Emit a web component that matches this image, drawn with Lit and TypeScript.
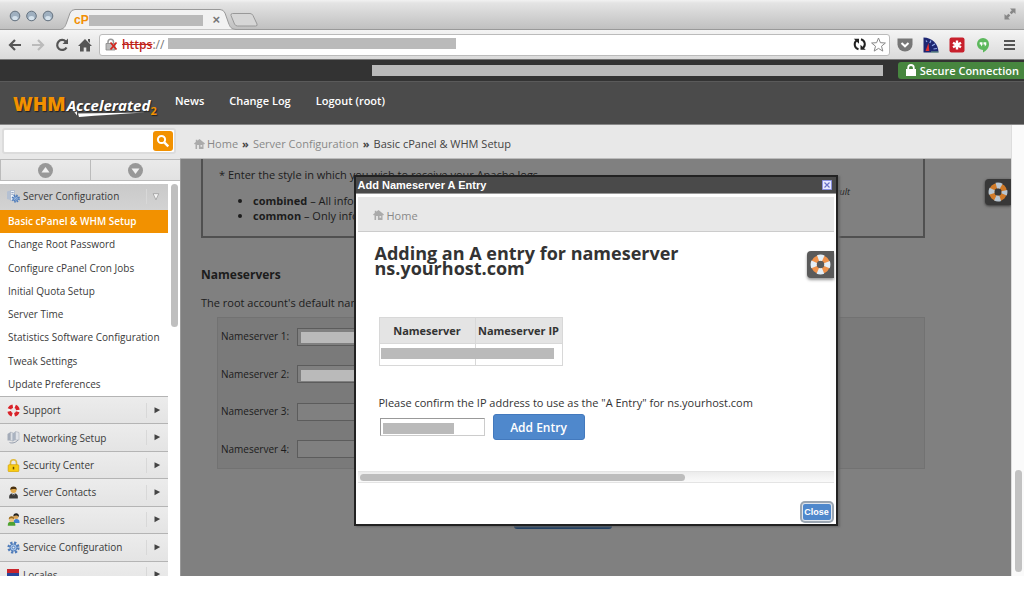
import { LitElement, html, css, svg } from "lit";
import { customElement } from "lit/decorators.js";
import { classMap } from "lit/directives/class-map.js";

const setupPages = [
  "Basic cPanel & WHM Setup",
  "Change Root Password",
  "Configure cPanel Cron Jobs",
  "Initial Quota Setup",
  "Server Time",
  "Statistics Software Configuration",
  "Tweak Settings",
  "Update Preferences",
];

const gear = (cx: number, cy: number, r: number) => svg`
  <circle cx=${cx} cy=${cy} r=${r} fill="none" stroke="#4f7cba" stroke-width=${r * 0.5} stroke-dasharray="${(r * 0.45).toFixed(2)} ${(r * 0.3354).toFixed(2)}"/>
  <circle cx=${cx} cy=${cy} r=${r * 0.72} fill="#a9c6ea" stroke="#4f7cba" stroke-width="1"/>
  <circle cx=${cx} cy=${cy} r=${r * 0.28} fill="#e8eef6" stroke="#4f7cba" stroke-width=".9"/>`;

const icons = {
  server: svg`
    <path d="M0 1.500 3.500.5v9.500L0 9z" fill="#b4c0d2"/><path d="M3.500.5h4v10h-4z" fill="#eef2f8" stroke="#9aabc4" stroke-width=".6"/>
    <path d="M4.300 2.500h2.400M4.300 4.300h2.400" stroke="#7f94b5" stroke-width=".8"/>${gear(8.8, 8.6, 3.3)}`,
  support: svg`
    <circle cx="6.500" cy="6.500" r="4.400" fill="none" stroke="#f3f3f3" stroke-width="3.600"/>
    <circle cx="6.500" cy="6.500" r="4.400" fill="none" stroke="#d8232a" stroke-width="3.600" stroke-dasharray="4.400 2.510" stroke-dashoffset="-1.250"/>`,
  network: svg`
    <path d="M.5 3 3.500 1v8.500L.5 9.500z" fill="#a3abb8"/><path d="M3.500 1 6.200 2v8L3.500 9.500z" fill="#dcdfe5" stroke="#9aa2ae" stroke-width=".5"/>
    <path d="M5.500 2.500 8.500.5V9L5.500 10.500z" fill="#aab3c1"/><path d="M8.500.5 12 1.500V9L8.500 9z" fill="#dfe2e8" stroke="#9aa2ae" stroke-width=".5"/>
    <path d="M2.500 11.500c3 1.200 6.500 0 8.500-2.500" fill="none" stroke="#8a94a6" stroke-width=".9"/>`,
  security: svg`
    <path d="M3.500 6.500V3.800a3 3 0 0 1 6 0v2.700" fill="none" stroke="#e0b93a" stroke-width="1.600"/>
    <rect x="1.200" y="5.700" width="10.600" height="7" rx="1" fill="#f9cd12" stroke="#d29d05" stroke-width=".7"/>
    <path d="M6.500 7.800v2.600" stroke="#6b4d00" stroke-width="1.500"/>`,
  contact: svg`
    <path d="M2.200 12.500c-.6-4 1.600-5.300 4.300-5.300s4.900 1.300 4.300 5.300z" fill="#3a3a3a"/>
    <path d="M5.200 7.200h2.600L6.500 11z" fill="#fff"/><path d="M6.500 8v3" stroke="#222" stroke-width=".8"/>
    <circle cx="6.500" cy="4" r="3" fill="#e2ab4c"/><path d="M3.300 4C3 1.500 4.500.4 6.500.4S10 1.500 9.700 4C8.800 2.500 5 2.700 3.300 4z" fill="#4a3210"/>`,
  resellers: svg`
    <path d="M6.500 10c0-3 1-4 3-4s3.300 1 3 4z" fill="#3f7fd0"/><circle cx="9" cy="3.500" r="2.500" fill="#d9a55a"/>
    <path d="M6.400 3.500C6.200 1.200 7.500.3 9.200.3s3.200 1.200 2.600 3.700C10.500 2.300 8 2.200 6.400 3.500z" fill="#222"/>
    <path d="M.8 12.700c-.3-3 1.200-4.200 3.700-4.200S8.700 9.700 8.300 12.700z" fill="#4fa332"/><circle cx="4.500" cy="6.400" r="2.600" fill="#efc27c"/>
    <path d="M1.800 6.300C1.600 4.200 3 3.300 4.600 3.300s2.800 1 2.500 3C5.800 5 3.500 5 1.800 6.300z" fill="#9a6a1c"/>`,
  service: gear(6.5, 6.5, 4.9),
  locales: svg`
    <path d="M0 1h12v4H0z" fill="#c9252c"/><path d="M0 5h12v5H0z" fill="#28469b"/><path d="M3 9h9v2.500H3z" fill="#e9e9f2"/>
    <path d="M8 9h4.500v3H8z" fill="#e88"/>`,
};
const icon = (name: keyof typeof icons) =>
  html`<svg class="icon" viewBox="0 0 13 13" aria-hidden="true">${icons[name]}</svg>`;

const groups: [keyof typeof icons, string][] = [
  ["support", "Support"],
  ["network", "Networking Setup"],
  ["security", "Security Center"],
  ["contact", "Server Contacts"],
  ["resellers", "Resellers"],
  ["service", "Service Configuration"],
  ["locales", "Locales"],
];

const house = html`<svg class="house" viewBox="0 0 11 10" aria-hidden="true">
  <path d="M5.500 0 11 4.600 10 5.500 9.500 5v5H1.500V5L1 5.500 0 4.600 1.800 3V.8h1.500V1.800z" fill="#aaa"/>
  <path d="M3 6h2v4H3zM6.500 6h1.700v1.800H6.500z" fill="#e2e2e2"/>
</svg>`;

const lifebuoy = html`<svg class="buoy" viewBox="0 0 22 22" aria-hidden="true">
  <circle cx="11" cy="11" r="7" fill="none" stroke="var(--buoy)" stroke-width="6"/>
  <circle cx="11" cy="11" r="7.200" fill="none" stroke="currentColor" stroke-width="6.400" stroke-dasharray="5.655 5.655" stroke-dashoffset="2.827"/>
</svg>`;

const tokens = css`
  :host { display: block; }
  * { box-sizing: border-box; }
  h1, h2, p, ul { margin: 0; padding: 0; }
  ul { list-style: none; }
  a { color: inherit; text-decoration: none; }
  button, input { font: inherit; color: inherit; border: 0; padding: 0; margin: 0; background: none; border-radius: 0; }
  svg { display: block; flex: none; }
  .house { width: 11px; height: 10px; }
  .bar { background: #bababa; height: 11px; }
`;

@customElement("browser-chrome")
export class BrowserChrome extends LitElement {
  static styles = [tokens, css`
    .tabs { height: 30px; padding-left: 9px; display: flex; background: linear-gradient(#f2f2f2, #e4e4e4 10%, #c0c0c0); border-bottom: 1px solid #999; }
    .lights { width: 46px; height: 12px; margin-top: 10px; }
    .tab { width: 176px; height: 21px; margin: 9px 0 0 6px; display: grid; }
    .tab > * { grid-area: 1 / 1; }
    .tab svg { width: 100%; height: 21px; }
    .label { display: flex; align-items: center; padding: 1px 17px 0 13px; z-index: 1; }
    .fav { font: bold 12px/12px "Liberation Sans", Arial, sans-serif; color: #f18f05; }
    .label .bar { flex: 1; }
    .x { margin-left: 9px; font: bold 13px/12px "Liberation Sans", Arial, sans-serif; color: #777; }
    .new { width: 30px; height: 14px; margin: 13px auto 0 -8px; }
    .expand { width: 12px; height: 12px; margin: 8px 8px 0 0; }
    .tools { height: 30px; padding: 4px 7px 4px 8px; display: flex; align-items: center; background: linear-gradient(#f4f4f4, #dadada); border-bottom: 1px solid #777; }
    .nav { width: 84px; height: 18px; margin-right: 7px; display: flex; align-items: center; justify-content: space-between; }
    .nav svg { width: 14px; height: 14px; }
    .url { flex: 1; height: 22px; background: #fff; border: 1px solid #bbb; border-radius: 3px; display: flex; align-items: center; padding: 0 3px 0 5px; font: 12px "Open Sans", sans-serif; color: #777; }
    .url s { color: #c02318; font-weight: 600; }
    .url .lock { width: 13px; height: 13px; margin-right: 4px; }
    .url .bar { width: 288px; margin: 0 auto 3px 4px; }
    .url .glyphs { width: 33px; height: 15px; }
    .ext { display: flex; gap: 10px; margin-left: 7px; }
    .ext svg { width: 16px; height: 16px; }
  `];
  render() {
    return html`
      <div class="tabs">
        <svg class="lights" viewBox="0 0 46 12" aria-hidden="true">
          ${[6, 22.5, 39].map(x => svg`<circle cx=${x} cy="6" r="4.800" fill="#9fb0c0" stroke="#667380"/><ellipse cx=${x} cy="8" rx="2.800" ry="2" fill="#d5e2ec"/>`)}
        </svg>
        <div class="tab">
          <svg viewBox="0 0 176 21" preserveAspectRatio="none" aria-hidden="true"><path d="M-2 20.500C3 20 4 18 5.500 14L9 4Q10.500.5 14 .5H159Q162.500.5 164 4L167.500 14C169 18 170 20 175 20.500V21H-2z" fill="#f2f2f2" stroke="#999"/></svg>
          <div class="label"><span class="fav">cP</span><span class="bar"></span><span class="x">×</span></div>
        </div>
        <svg class="new" viewBox="0 0 30 14" aria-hidden="true"><path d="M3.500.5H21q2 0 3 2L28 11q.8 2-1.500 2H8.500q-2 0-3-2L2 2.500Q1.500.5 3.500.5z" fill="#d6d6d6" stroke="#999"/></svg>
        <svg class="expand" viewBox="0 0 12 12" aria-hidden="true"><path d="M6 .5h5.500V6L9.700 4.200 7.500 6.300 5.700 4.500 7.800 2.300zM6 11.500H.5V6l1.800 1.800L4.500 5.700l1.800 1.800L4.200 9.700z" fill="#888"/></svg>
      </div>
      <div class="tools">
        <div class="nav">
          <svg viewBox="0 0 14 14"><path d="M13 7H2.500M7 2 2 7l5 5" fill="none" stroke="#555" stroke-width="2.200"/></svg>
          <svg viewBox="0 0 14 14"><path d="M1 7h10.500M7 2l5 5-5 5" fill="none" stroke="#bbb" stroke-width="2.200"/></svg>
          <svg viewBox="0 0 14 14"><path d="M11.500 9.500A5 5 0 1 1 10.800 3.500" fill="none" stroke="#555" stroke-width="2.200"/><path d="M13 .5V6H7.500z" fill="#555"/></svg>
          <svg viewBox="0 0 14 14"><path d="M7 1 14 8h-2v5.500H8.300V9.500H5.700v4H2V8H0zM10 1h2v4l-2-2z" fill="#555"/></svg>
        </div>
        <div class="url">
          <svg class="lock" viewBox="0 0 13 13"><path d="M3 5.500V4a2.700 2.700 0 0 1 5.500 0v1.500" fill="none" stroke="#999" stroke-width="1.500"/><path d="M1 5.500h9V12H1z" fill="#bbb" stroke="#888" stroke-width=".8"/><path d="m5.500 4.500 6 7m0-7-6 7" stroke="#d4241c" stroke-width="1.700"/></svg>
          <s>https</s><span>://</span><span class="bar"></span>
          <svg class="glyphs" viewBox="0 0 33 15"><path d="M5.500 12.200C1.300 11 .5 6 3.500 3.500M8 2.300c4.200 1.200 5 6.200 2 8.700" fill="none" stroke="#222" stroke-width="2"/><path d="M.8 1.800H6v5zM12.700 12.700H7.500v-5z" fill="#222"/><path d="m25.500 1 1.900 4.700 5 .3-3.900 3.200 1.300 4.900-4.300-2.700-4.300 2.700 1.300-4.900L18.600 6l5-.3z" fill="#fff" stroke="#888"/></svg>
        </div>
        <div class="ext">
          <svg viewBox="0 0 16 16"><path d="M.5 1.500h15v6a7.500 7 0 0 1-15 0z" fill="#777"/><path d="m4.500 6 3.500 3.300L11.500 6" fill="none" stroke="#fff" stroke-width="2"/></svg>
          <svg viewBox="0 0 16 16"><path d="M.5.5C9 .5 15.500 7 15.500 15.500H.5z" fill="#1d2672"/><path d="M3 3.500 4 5M8 3.500 6.800 6M12 7l-3 1.800M14 11.500l-3.500.5" stroke="#8fa8e8" stroke-width="1.200"/><path d="m2.500 14 3-8 .8 8z" fill="#e03030"/><path d="M8 15h7.500" stroke="#7a8"/></svg>
          <svg viewBox="0 0 16 16"><rect x=".5" y=".5" width="15" height="15" rx="2" fill="#c8202c"/><path d="M8 3.500v9M4 5.700l8 4.600M12 5.700l-8 4.600" stroke="#fff" stroke-width="2.400"/></svg>
          <svg viewBox="0 0 16 16"><path d="M8 1a6 6 0 0 1 6 6c0 4-2.500 6.500-6 8.500V13a6 6 0 0 1 0-12z" fill="#5cb85c"/><path d="M4.700 5.200h2.800v2.500L6 9.500V7.500H4.700zM8.500 5.200h2.800v2.500L9.800 9.500V7.500H8.500z" fill="#fff"/></svg>
          <svg viewBox="0 0 16 16"><path d="M3 4h11M3 8h11M3 12h11" stroke="#555" stroke-width="2.200"/></svg>
        </div>
      </div>`;
  }
}

@customElement("whm-header")
export class WhmHeader extends LitElement {
  static styles = [tokens, css`
    :host { color: #fff; font: 600 11px/17px "Open Sans", sans-serif; }
    .top { height: 22px; background: #333; border-bottom: 1px solid #5a5a5a; display: flex; justify-content: flex-end; align-items: center; }
    .top .bar { width: 511px; margin-right: 15px; }
    .secure { height: 17px; padding: 0 5px 0 8px; display: flex; align-items: center; gap: 4px; background: #47863f; border-radius: 3px 0 0 3px; }
    .secure svg { width: 10px; height: 12px; margin-bottom: 2px; }
    .main { height: 43px; background: #4b4b4b; border-bottom: 1px solid #888; display: flex; align-items: center; padding: 0 13px; }
    .logo { width: 143px; margin-right: 19px; display: grid; text-shadow: 1px 1px 1px #222; }
    .logo > * { grid-area: 1 / 1; }
    .words { display: flex; align-items: baseline; line-height: 24px; white-space: nowrap; }
    .whm { font-size: 19px; font-weight: 800; color: #f29100; }
    .acc { font: italic 700 15px/24px "Open Sans", sans-serif; margin-left: 1px; padding-top: 4px; }
    .two { font-size: 11px; font-weight: 700; color: #f29100; align-self: flex-end; line-height: 12px; }
    .swoosh { width: 143px; height: 28px; }
    nav { display: flex; gap: 25px; padding-bottom: 5px; }
  `];
  render() {
    return html`
      <div class="top">
        <span class="bar"></span>
        <span class="secure"><svg viewBox="0 0 10 12"><path d="M2.200 6V3.800a2.800 2.800 0 0 1 5.600 0V6" fill="none" stroke="#fff" stroke-width="1.800"/><path d="M0 5h10v7H0z" fill="#fff"/></svg>Secure Connection</span>
      </div>
      <div class="main">
        <div class="logo">
          <svg class="swoosh" viewBox="0 0 143 28"><path d="M61 18 64 23v3.500L59 20zM65 24.500 132 23.500Q96 25.500 66 28z" fill="#fff"/></svg>
          <div class="words"><span class="whm">WHM</span><span class="acc">Accelerated</span><span class="two">2</span></div>
        </div>
        <nav><a href="#news">News</a><a href="#log">Change Log</a><a href="#logout">Logout (root)</a></nav>
      </div>`;
  }
}

@customElement("whm-sidebar")
export class WhmSidebar extends LitElement {
  static styles = [tokens, css`
    :host { width: 180px; overflow: hidden; background: #fff; font: 10px/16px "Open Sans", sans-serif; color: #3a3a3a; }
    .search { height: 34px; padding: 3px 4px 5px 2px; background: #e8e8e8; display: flex; }
    .box { flex: 1; display: flex; align-items: center; background: #fff; border: 2px solid #dcdcdc; border-radius: 3px; padding: 0 1px; }
    .box input { flex: 1; min-width: 0; height: 20px; outline: 0; }
    .go { width: 20px; height: 20px; border-radius: 3px; background: #f29100; }
    .go svg { width: 20px; height: 20px; }
    .pager { display: grid; grid-template-columns: 1fr 1fr; height: 22px; border: solid #bbb; border-width: 1px 0; }
    .pager button { display: grid; place-items: center; background: linear-gradient(#eaeaea, #e2e2e2); border-left: 1px solid #bbb; }
    .pager svg { width: 15px; height: 15px; }
    .scroll { display: flex; gap: 3px; padding-top: 3px; }
    .menu { width: 168px; }
    .track { width: 7px; height: 143px; border-radius: 4px; background: #bfbfbf; }
    .head { width: 100%; display: flex; align-items: center; padding: 0 5px 0 7px; background: linear-gradient(#ececec, #e4e4e4); text-align: left; border-top: 1px solid #b4b4b4; }
    .head .icon { width: 13px; height: 13px; margin-right: 3px; }
    .head span { flex: 1; }
    .head .arrow { width: 17px; height: 15px; border-left: 1px solid #d8d8d8; }
    .head.open { height: 26px; background: linear-gradient(#c9c9c9, #d3d3d3); border: 0; padding-bottom: 2px; }
    .pages { height: 186px; display: grid; grid-auto-rows: 1fr; }
    .pages a { display: flex; align-items: center; padding: 0 0 1px 8px; white-space: nowrap; }
    .pages .on { background: #f29100; color: #fff; font-weight: 600; }
    .groups { height: 192px; display: grid; grid-auto-rows: 1fr; }
  `];
  render() {
    return html`
      <form class="search" role="search"><div class="box">
        <input type="text" aria-label="Search">
        <button class="go" type="button" aria-label="Find"><svg viewBox="0 0 20 20"><circle cx="8.500" cy="8.500" r="3.600" fill="none" stroke="#fff" stroke-width="2"/><path d="m11.300 11.300 4 4" stroke="#fff" stroke-width="2.400"/></svg></button>
      </div></form>
      <div class="pager">
        <button aria-label="Collapse all"><svg viewBox="0 0 15 15"><circle cx="7.500" cy="7.500" r="7.500" fill="#989898"/><path d="m7.500 4 4 5.500h-8z" fill="#f0f0f0"/></svg></button>
        <button aria-label="Expand all"><svg viewBox="0 0 15 15"><circle cx="7.500" cy="7.500" r="7.500" fill="#989898"/><path d="m7.500 11 4-5.500h-8z" fill="#f0f0f0"/></svg></button>
      </div>
      <div class="scroll">
        <div class="menu">
          <button class="head open">${icon("server")}<span>Server Configuration</span>
            <svg class="arrow" viewBox="0 0 17 15"><path d="M6.500 4.500h6l-3 6.500z" fill="#f6f6f6" stroke="#999" stroke-width=".8"/></svg></button>
          <nav class="pages">${setupPages.map((p, i) => html`<a href="#" class=${classMap({ on: i === 0 })}>${p}</a>`)}</nav>
          <div class="groups">${groups.map(([g, label]) => html`<button class="head">${icon(g)}<span>${label}</span>
            <svg class="arrow" viewBox="0 0 17 15"><path d="M8 4v6.500L14 7z" fill="#444"/></svg></button>`)}</div>
        </div>
        <div class="track"></div>
      </div>`;
  }
}

@customElement("whm-setup")
export class WhmSetup extends LitElement {
  static styles = [tokens, css`
    :host { flex: 1; min-height: 0; display: grid; grid-template-columns: 1fr 26px; overflow: hidden; isolation: isolate; background: #808080; border-left: 1px solid #999; font: 11px/15px "Open Sans", sans-serif; color: #1c1c1c; }
    .form { padding: 0 60px 0 20px; }
    .logs { height: 79px; display: flex; justify-content: space-between; border: 2px solid #505050; border-top: 0; padding: 8px 73px 0 16px; }
    .logs ul { list-style: disc; margin-top: 11px; padding-left: 34px; font-size: 11px; }
    .logs b, h2 { font-weight: 700; }
    .note { font: italic 9px/12px "Open Sans", sans-serif; margin-top: 19px; }
    h2 { font-size: 12px; line-height: 18px; margin: 28px 0 11px; }
    .servers { margin: 7px 0 34px 16px; background: #7a7a7a; border: 1px solid #727272; padding: 0 3px; height: 152px; display: grid; grid-auto-rows: 1fr; }
    .row { display: flex; gap: 5px; align-items: center; }
    .row label { width: 71px; font-size: 10px; }
    .cell { display: grid; align-items: center; width: 190px; }
    .cell > * { grid-area: 1 / 1; }
    .cell input { height: 18px; width: 100%; border: 1px solid #5c5c5c; background: #808080; }
    .cell .bar { margin: 2px 2px 0 4px; z-index: 1; }
    .save { display: block; margin: 0 auto; width: 98px; height: 26px; border-radius: 3px; background: #1f3f63; color: #aaa; font-weight: 700; }
    .help { margin-top: 20px; width: 26px; height: 26px; background: #383838; border-radius: 4px 0 0 4px; box-shadow: 0 1px 3px #333; --buoy: #d07a28; color: #b9c6d1; }
    .buoy { width: 20px; height: 20px; margin: 3px; }
  `];
  render() {
    return html`
      <div class="form">
        <div class="logs">
          <div><p>* Enter the style in which you wish to receive your Apache logs.</p>
            <ul><li><b>combined</b> – All information</li><li><b>common</b> – Only information</li></ul></div>
          <span class="note">default</span>
        </div>
        <h2>Nameservers</h2>
        <p>The root account's default nameservers.</p>
        <div class="servers">${[1, 2, 3, 4].map(n => html`<div class="row">
          <label for="ns${n}">Nameserver ${n}:</label>
          <span class="cell"><input id="ns${n}" type="text">${n < 3 ? html`<span class="bar"></span>` : ""}</span>
        </div>`)}</div>
        <button class="save">Save</button>
      </div>
      <button class="help" aria-label="Help">${lifebuoy}</button>`;
  }
}

@customElement("nameserver-dialog")
export class NameserverDialog extends LitElement {
  static styles = [tokens, css`
    :host { width: 484px; background: #fff; border: 2px solid #222; box-shadow: 2px 1px 2px #666; padding-bottom: 4px; font: 11px/15px "Open Sans", sans-serif; color: #333; }
    .title { height: 17px; padding: 0 4px 0 2px; background: #4a4a4a; border-bottom: 1px solid #999; color: #fff; display: flex; align-items: center; justify-content: space-between; font: bold 11px/15px "Liberation Sans", Arial, sans-serif; }
    .title svg, .shut { width: 10px; height: 10px; }
    .body { margin: 3px 2px 0; display: grid; grid-template-columns: 1fr 27px; align-items: start; }
    .crumb { grid-column: 1 / 3; height: 35px; padding-left: 15px; display: flex; align-items: center; gap: 3px; background: #e8e8e8; border-bottom: 1px solid #ccc; color: #888; }
    .crumb a, .crumb .house { margin-top: 2px; }
    h1 { font-size: 18px; line-height: 15px; font-weight: 700; margin: 14px 80px 41px 17px; }
    .help { margin-top: 19px; width: 27px; height: 27px; background: #5a5a5a; border-radius: 4px 0 0 4px; box-shadow: 0 2px 3px #999; --buoy: #f0924a; color: #e4eff8; }
    .buoy { width: 21px; height: 21px; margin: 3px; }
    .confirm { grid-column: 1 / 3; padding: 0 21px 31px; }
    .data { display: inline-grid; margin-bottom: 29px; }
    .data > * { grid-area: 1 / 1; }
    table { border-collapse: collapse; width: 184px; table-layout: fixed; }
    th, td { border: 1px solid #d8d8d8; padding: 0; white-space: nowrap; }
    th { height: 26px; background: #e4e4e4; font-weight: 700; }
    th:first-child { width: 96px; }
    td { height: 22px; }
    .data .bar { align-self: end; margin: 0 9px 7px 2px; }
    .line { display: flex; align-items: center; gap: 8px; margin-top: 4px; }
    .ip { display: grid; align-items: center; width: 105px; margin-left: 1px; }
    .ip > * { grid-area: 1 / 1; }
    .ip input { width: 100%; height: 18px; border: 1px solid #aaa; border-color: #999 #ccc #ccc #999; outline: 0; }
    .ip .bar { width: 71px; margin-left: 3px; margin-top: 2px; z-index: 1; }
    .add { width: 92px; height: 26px; border-radius: 3px; background: #4f88cc; border: 1px solid #4379bd; color: #fff; font-size: 12px; font-weight: 600; }
    .hscroll { grid-column: 1 / 3; height: 12px; padding: 2px; background: linear-gradient(#ececec, #fafafa); border: solid #e4e4e4; border-width: 1px 0; }
    .hscroll div { width: 325px; height: 7px; border-radius: 4px; background: #bdbdbd; }
    .close { display: block; margin: 21px 5px 0 auto; width: 28px; height: 16px; border-radius: 2px; background: #4f88cc; color: #fff; font: bold 9px/14px "Liberation Sans", Arial, sans-serif; box-shadow: 0 0 0 1px #e0e6ee, 0 0 0 3px #9aa5b1; }
  `];
  render() {
    return html`
      <div class="title"><span>Add Nameserver A Entry</span>
        <button class="shut" aria-label="Close dialog"><svg viewBox="0 0 10 10"><path d="M.5.500h9v9h-9z" fill="#e8e9ff" stroke="#8a90e0"/><path d="m2.500 2.500 5 5m0-5-5 5" stroke="#6a72c8" stroke-width="1.200"/></svg></button>
      </div>
      <div class="body">
        <div class="crumb">${house}<a href="#">Home</a></div>
        <h1>Adding an A entry for nameserver ns.yourhost.com</h1>
        <button class="help" aria-label="Help">${lifebuoy}</button>
        <div class="confirm">
          <div class="data">
            <table><thead><tr><th>Nameserver</th><th>Nameserver IP</th></tr></thead><tbody><tr><td></td><td></td></tr></tbody></table>
            <span class="bar"></span>
          </div>
          <p><label for="ip">Please confirm the IP address to use as the "A Entry" for ns.yourhost.com</label></p>
          <div class="line"><span class="ip"><input id="ip" type="text"><span class="bar"></span></span><button class="add">Add Entry</button></div>
        </div>
        <div class="hscroll"><div></div></div>
      </div>
      <button class="close">Close</button>`;
  }
}

@customElement("app-root")
export class AppRoot extends LitElement {
  static styles = [tokens, css`
    :host { height: 100vh; min-height: 400px; display: flex; flex-direction: column; overflow: hidden; background: #fff; font: 11px/15px "Open Sans", sans-serif; color: #444; }
    .page { flex: 1; min-height: 0; display: flex; margin-bottom: 13px; }
    whm-sidebar { flex: none; }
    main { flex: 1; min-width: 0; display: flex; flex-direction: column; position: relative; }
    .crumbs { flex: none; height: 34px; padding: 4px 0 0 14px; display: flex; align-items: center; background: #e8e8e8; gap: 4px; border-bottom: 1px solid #bbb; }
    .crumbs a { color: #888; }
    .crumbs .house { margin-right: -2px; }
    .layer { position: absolute; inset: 50px 0 0; z-index: 2; display: flex; justify-content: center; align-items: flex-start; }
    .scroll { width: 13px; padding: 0 2px 4px 3px; border-left: 1px solid #ddd; background: #fafafa; display: flex; align-items: flex-end; }
    .thumb { width: 7px; height: 102px; border-radius: 4px; background: #c2c2c2; }
  `];
  render() {
    return html`
      <browser-chrome></browser-chrome>
      <whm-header></whm-header>
      <div class="page">
        <whm-sidebar></whm-sidebar>
        <main>
          <nav class="crumbs">${house}<a href="#">Home</a><b>»</b><a href="#">Server Configuration</a><b>»</b><span>Basic cPanel &amp; WHM Setup</span></nav>
          <whm-setup></whm-setup>
          <div class="layer"><nameserver-dialog role="dialog" aria-label="Add Nameserver A Entry"></nameserver-dialog></div>
        </main>
        <div class="scroll"><div class="thumb"></div></div>
      </div>`;
  }
}
